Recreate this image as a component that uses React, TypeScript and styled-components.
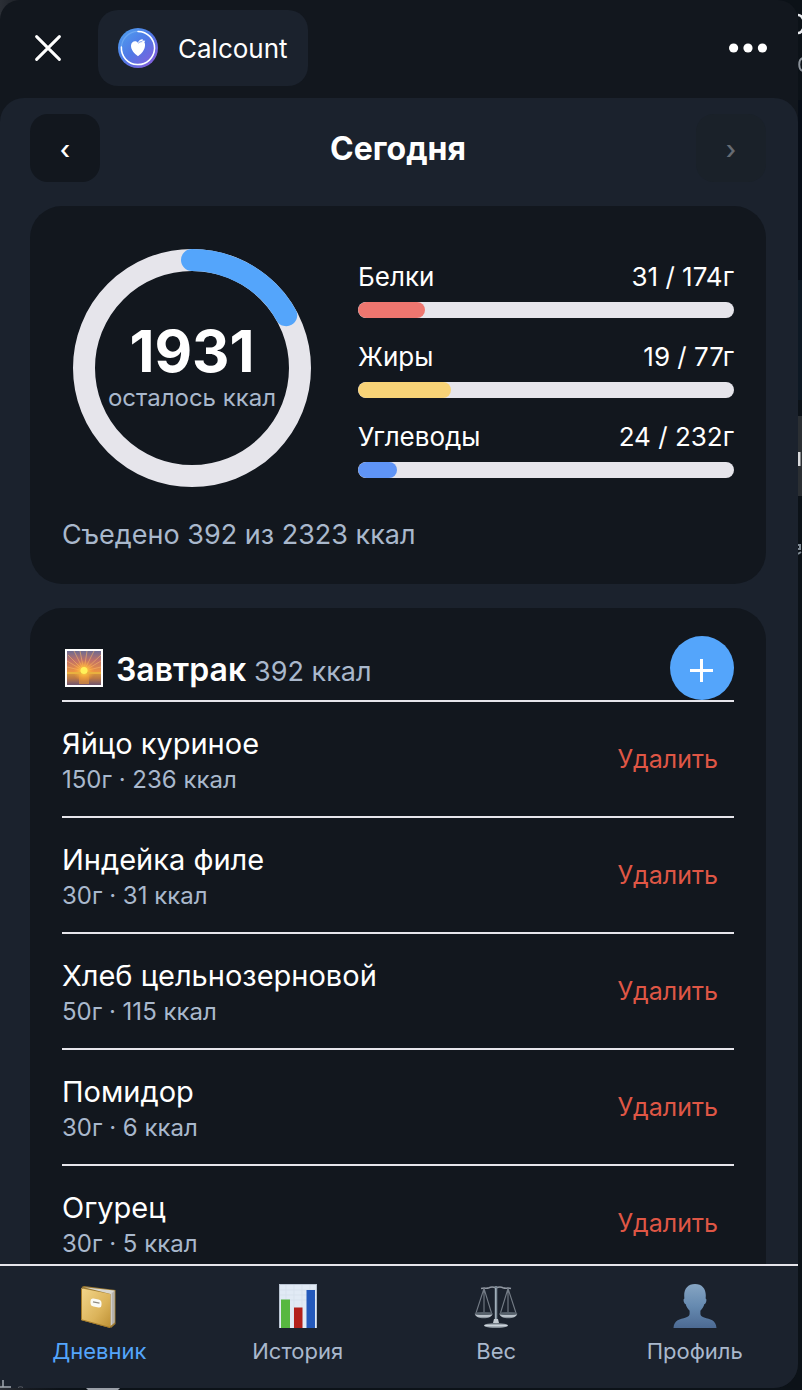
import React from "react";
import styled, { createGlobalStyle } from "styled-components";

const color = {
  card: "#12171e",
  page: "#1b222d",
  line: "#e6e5eb",
  text: "#ffffff",
  muted: "#a9b8cc",
  accent: "#54a5fb",
  danger: "#df5645",
};

const GlobalStyle = createGlobalStyle`
  * { box-sizing: border-box; }
  body {
    margin: 0;
    background: #0c1218;
    color: ${color.text};
    font-family: Inter, "Liberation Sans", sans-serif;
  }
  button { font: inherit; color: inherit; border: 0; padding: 0; background: none; cursor: pointer; }
  h1, h2, p, ul { margin: 0; padding: 0; }
  svg { display: block; }
`;

const Desktop = styled.div`
  position: relative;
  height: 100vh;
  padding: 0 4px 2px 0;
  overflow: hidden;
  background: linear-gradient(90deg, #2b2f36 0, #15191f 30px, #0c1218 60px);
`;

const EdgeBehind = styled.svg`
  position: absolute;
  top: 0;
  right: 0;
`;

const BottomBehind = styled.svg`
  position: absolute;
  bottom: 0;
  left: 0;
`;

const Window = styled.div`
  display: flex;
  flex-direction: column;
  height: 100%;
  overflow: hidden;
  border-radius: 20px 20px 24px 8px;
  background: ${color.card};
`;

const TitleBar = styled.header`
  display: flex;
  align-items: center;
  flex: none;
  height: 98px;
  padding: 0 30px 2px 34px;
`;

const IconButton = styled.button`
  display: flex;
`;

const AppTab = styled.button`
  display: flex;
  align-items: center;
  gap: 20px;
  height: 76px;
  margin: 0 auto 0 36px;
  padding: 0 20px;
  border-radius: 20px;
  background: ${color.page};
  font-size: 26px;
`;

const Body = styled.main`
  flex: 1;
  min-height: 0;
  overflow: hidden;
  padding: 16px 32px 0 30px;
  border-radius: 24px 24px 0 0;
  background: ${color.page};
`;

const DateBar = styled.div`
  display: flex;
  align-items: center;
  justify-content: space-between;
  margin-bottom: 24px;
`;

const DateTitle = styled.h1`
  padding-top: 2px;
  font-size: 32px;
  line-height: 40px;
  font-weight: 700;
`;

const StepButton = styled.button`
  width: 70px;
  height: 68px;
  padding-top: 4px;
  border-radius: 18px;
  background: ${color.card};
  font-size: 26px;
  line-height: 64px;
  font-weight: 500;

  &:disabled {
    background: #1a2129;
    color: #666b72;
  }
`;

const Card = styled.section`
  margin-bottom: 24px;
  border-radius: 32px;
  background: ${color.card};
`;

const SummaryCard = styled(Card)`
  padding: 32px;
`;

const SummaryTop = styled.div`
  display: flex;
  gap: 36px;
  margin-bottom: 20px;
`;

const Ring = styled.div`
  display: grid;
  flex: none;
  width: 260px;
  height: 260px;

  > * { grid-area: 1 / 1; }
`;

const RingText = styled.div`
  align-self: center;
  padding-bottom: 4px;
  text-align: center;
`;

const RingValue = styled.p`
  font-size: 58px;
  line-height: 64px;
  font-weight: 700;
`;

const RingCaption = styled.p`
  color: ${color.muted};
  font-size: 24px;
  line-height: 30px;
`;

const Macros = styled.div`
  display: flex;
  flex-direction: column;
  flex: 1;
  gap: 24px;
  padding-top: 24px;
`;

const MacroLabel = styled.div`
  display: flex;
  justify-content: space-between;
  margin-bottom: 10px;
  font-size: 26px;
  line-height: 30px;
`;

const Track = styled.div`
  height: 16px;
  overflow: hidden;
  border-radius: 8px;
  background: ${color.line};
`;

const Fill = styled.div<{ $color: string }>`
  height: 100%;
  border-radius: 8px;
  background: ${(p) => p.$color};
`;

const Eaten = styled.p`
  color: ${color.muted};
  font-size: 27px;
  line-height: 34px;
`;

const MealCard = styled(Card)`
  padding: 28px 32px 32px;
`;

const MealHeader = styled.div`
  display: flex;
  align-items: center;
  height: 66px;
  border-bottom: 2px solid ${color.line};
`;

const MealHeading = styled.div`
  display: flex;
  align-items: baseline;
  flex: 1;
  gap: 8px;
  padding: 4px 0 0 12px;
`;

const MealTitle = styled.h2`
  font-size: 32px;
  line-height: 40px;
  font-weight: 600;
`;

const MealTotal = styled.span`
  color: ${color.muted};
  font-size: 27px;
  line-height: 34px;
`;

const AddButton = styled.button`
  display: grid;
  place-items: center;
  width: 64px;
  height: 64px;
  border-radius: 50%;
  background: ${color.accent};
`;

const FoodList = styled.ul`
  list-style: none;
`;

const FoodRow = styled.li`
  display: flex;
  align-items: center;
  justify-content: space-between;
  height: 116px;
  padding-right: 16px;
  border-bottom: 2px solid ${color.line};
`;

const FoodText = styled.div`
  padding-top: 6px;
`;

const FoodName = styled.p`
  font-size: 29px;
  line-height: 36px;
`;

const FoodInfo = styled.p`
  color: ${color.muted};
  font-size: 24px;
  line-height: 36px;
`;

const DeleteButton = styled.button`
  color: ${color.danger};
  font-size: 25px;
`;

const NavBar = styled.nav`
  display: grid;
  grid-template-columns: repeat(4, 1fr);
  flex: none;
  height: 124px;
  padding: 18px 4px 0 0;
  border-top: 2px solid ${color.line};
  background: ${color.page};
`;

const NavItem = styled.a<{ $active?: boolean }>`
  display: flex;
  flex-direction: column;
  align-items: center;
  gap: 8px;
  color: ${(p) => (p.$active ? color.accent : color.muted)};
  font-size: 22px;
  line-height: 30px;
  text-decoration: none;
`;

const CloseIcon = () => (
  <svg width="28" height="28" viewBox="0 0 28 28" aria-hidden="true">
    <path d="M2.600 2.600 25.400 25.400M25.400 2.600 2.600 25.400" stroke="#fff" strokeWidth="3" strokeLinecap="round" />
  </svg>
);

const MoreIcon = () => (
  <svg width="40" height="12" viewBox="0 0 40 12" aria-hidden="true" fill="#fff">
    <circle cx="5.6" cy="6" r="4.6" />
    <circle cx="20" cy="6" r="4.6" />
    <circle cx="34.4" cy="6" r="4.6" />
  </svg>
);

const AppLogo = () => (
  <svg width="40" height="40" viewBox="0 0 40 40" aria-hidden="true">
    <defs>
      <linearGradient id="logo" x1="0.1" y1="0.1" x2="0.85" y2="0.9">
        <stop offset="0" stopColor="#4f9bee" />
        <stop offset="0.5" stopColor="#5078e6" />
        <stop offset="1" stopColor="#8260dc" />
      </linearGradient>
    </defs>
    <circle cx="20" cy="20" r="20" fill="url(#logo)" />
    <circle cx="20" cy="20" r="16.6" fill="none" stroke="#6ba6f2" strokeWidth="1.2" />
    <path d="M20 3.400A16.600 16.600 0 1 1 3.400 19" fill="none" stroke="#fff" strokeWidth="1.500" strokeLinecap="round" />
    <path d="M20 28.200c-4-2.600-7-6.400-7-10.400 0-3 2-4.600 4-4.600 1.400 0 2.300.6 3 1.500.6-2.200 2.400-3.700 5-3.500l-.7 1.300 3 .3-1 1.500c.8 1.100.8 2.200.7 3.500-.3 4-3 7.800-7 10.400z" fill="#fff" />
    <path d="M20.300 15.200c1.200-1.200 2.400-1.700 4-1.500" fill="none" stroke="#5a80e8" strokeWidth="0.8" />
  </svg>
);

const SunriseIcon = () => (
  <svg width="42" height="42" viewBox="0 0 42 42" aria-hidden="true">
    <defs>
      <linearGradient id="sky" x1="0" y1="0" x2="0" y2="1">
        <stop offset="0" stopColor="#6d6c92" />
        <stop offset="0.45" stopColor="#c07068" />
        <stop offset="1" stopColor="#ec9440" />
      </linearGradient>
      <linearGradient id="sea" x1="0" y1="0" x2="0" y2="1">
        <stop offset="0" stopColor="#dd9c3d" />
        <stop offset="0.5" stopColor="#bb7845" />
        <stop offset="1" stopColor="#6f5570" />
      </linearGradient>
      <radialGradient id="sun">
        <stop offset="0" stopColor="#ffe95c" />
        <stop offset="0.35" stopColor="#ffc23e" stopOpacity="0.8" />
        <stop offset="1" stopColor="#ff9a35" stopOpacity="0" />
      </radialGradient>
    </defs>
    <rect x="3" y="2" width="38" height="38" fill="#fff" />
    <rect x="5" y="4" width="34" height="21" fill="url(#sky)" />
    <path
      d="M22 24 5 20M22 24 5 14M22 24 6 8M22 24 12 4M22 24 18 4M22 24 25 4M22 24 32 4M22 24 39 8M22 24 39 14M22 24 39 20"
      stroke="#f7b567"
      strokeWidth="1"
      opacity="0.6"
    />
    <rect x="5" y="25" width="34" height="13" fill="url(#sea)" />
    <rect x="17" y="28" width="10" height="9" fill="#e0913c" opacity="0.7" />
    <circle cx="22" cy="24" r="11" fill="url(#sun)" />
    <path d="M5 26h34" stroke="#e9b13f" strokeWidth="2" />
    <circle cx="22" cy="23.500" r="3.500" fill="#fff15a" />
  </svg>
);

const PlusIcon = () => (
  <svg width="24" height="24" viewBox="0 0 24 24" aria-hidden="true" overflow="visible">
    <path d="M11.500 3v23M0 14.500h23" stroke="#fff" strokeWidth="3" />
  </svg>
);

const DiaryIcon = () => (
  <svg width="44" height="44" viewBox="0 0 44 44" aria-hidden="true">
    <defs>
      <linearGradient id="cover" x1="0" y1="0" x2="1" y2="1">
        <stop offset="0" stopColor="#f3d68b" />
        <stop offset="0.6" stopColor="#dcb45b" />
        <stop offset="1" stopColor="#bd9034" />
      </linearGradient>
    </defs>
    <path d="M4.500 3 7 2l31.500 4v34L34 44z" fill="#9c7a32" />
    <path d="M7 3.200 37.500 6.500v32L33.500 42V10z" fill="#d9d7d0" />
    <path d="M35.300 8.500v32M36.700 7.500v31.500" stroke="#8e8b86" strokeWidth="0.6" />
    <path d="M4 4.300 33.300 10v34L4 36z" fill="url(#cover)" />
    <path d="M4.500 4.500v31.300L33 43.500" fill="none" stroke="#a57b29" strokeWidth="1" />
    <rect x="0" y="0" width="11" height="8" rx="3" transform="matrix(1 .18 0 1 13.500 14)" fill="#fafaf5" />
    <path d="m16 17.800 6.500 1.300" stroke="#8e8a80" strokeWidth="1.200" />
  </svg>
);

const ChartIcon = () => (
  <svg width="44" height="44" viewBox="0 0 44 44" aria-hidden="true">
    <rect x="3" y="0" width="38" height="44" fill="#b9c4d2" />
    <rect x="4" y="1" width="36" height="43" fill="#e1eaf5" />
    <path d="M4 6h36M4 11h36M4 16h36M10 1v43M18 1v43M26 1v43M34 1v43" stroke="#d6e0ed" strokeWidth="0.7" />
    <rect x="5" y="15.500" width="9" height="28.500" fill="#57b840" />
    <rect x="18" y="23.500" width="8.500" height="20.500" fill="#b3201b" />
    <rect x="30.500" y="6" width="8.500" height="38" fill="#2459bb" />
  </svg>
);

const ScalesIcon = () => (
  <svg width="44" height="44" viewBox="0 0 44 44" aria-hidden="true" fill="none">
    <defs>
      <linearGradient id="metal" x1="0" y1="0" x2="0" y2="1">
        <stop offset="0" stopColor="#5c656f" />
        <stop offset="0.5" stopColor="#cdd5dc" />
        <stop offset="1" stopColor="#6a747e" />
      </linearGradient>
    </defs>
    <path d="M7 4.500c4-1 5 .3 8-.8 2.500-1 4.500-.8 7 .3 2.500-1.100 4.500-1.300 7-.3 3 1.100 4-.2 8 .8" stroke="#9299a3" strokeWidth="1.500" />
    <path d="M10 4.500 2 29M10 4.500 17.500 29M10 4.500V28M34 4.500 26.500 29M34 4.500 42 29M34 4.500V28" stroke="#747c86" strokeWidth="1.100" />
    <path d="M22 2v37" stroke="#76838f" strokeWidth="2.600" />
    <path d="M21.700 4v34" stroke="#b8c5cf" strokeWidth="0.800" />
    <path d="M.6 29.500h18.200c-1 3.300-4.600 4.800-9.100 4.800S1.600 32.800.6 29.500zM25.200 29.500h18.200c-1 3.300-4.600 4.800-9.100 4.800s-8.100-1.500-9.100-4.800z" fill="url(#metal)" />
    <ellipse cx="9.700" cy="29.500" rx="9" ry="1.600" fill="#58626c" />
    <ellipse cx="34.300" cy="29.500" rx="9" ry="1.600" fill="#58626c" />
    <path d="M20 35h4l1 4h-6z" fill="#c3cad1" />
    <ellipse cx="22" cy="41.500" rx="12" ry="2.600" fill="url(#metal)" />
  </svg>
);

const ProfileIcon = () => (
  <svg width="44" height="44" viewBox="0 0 44 44" aria-hidden="true">
    <defs>
      <linearGradient id="person" x1="0" y1="0" x2="0" y2="1">
        <stop offset="0" stopColor="#86a5c3" />
        <stop offset="0.5" stopColor="#668ab0" />
        <stop offset="1" stopColor="#4c6a93" />
      </linearGradient>
    </defs>
    <path
      d="M22 0c7 0 10.800 4.600 10.800 11.300 0 1.200-.1 2.200-.2 3.200 1.200.3 1 2.600.2 4.200-.4.900-.8 1.300-1.400 1.400-.8 2.900-2.200 5-4 6.700v3c0 1.700 1.200 2.800 3.700 3.600C37 35.300 43 35.600 43.500 44H.5C1 35.600 7 35.300 12.900 33.400c2.500-.8 3.700-1.900 3.700-3.600v-3c-1.800-1.700-3.200-3.800-4-6.700-.6-.1-1-.5-1.400-1.400-.8-1.600-1-3.900.2-4.200-.1-1-.2-2-.2-3.200C11.200 4.600 15 0 22 0z"
      fill="url(#person)"
    />
  </svg>
);

const macros = [
  { name: "Белки", eaten: 31, goal: 174, color: "#ee766f" },
  { name: "Жиры", eaten: 19, goal: 77, color: "#f8d377" },
  { name: "Углеводы", eaten: 24, goal: 232, color: "#5f94f6" },
];

const foods = [
  { name: "Яйцо куриное", grams: 150, kcal: 236 },
  { name: "Индейка филе", grams: 30, kcal: 31 },
  { name: "Хлеб цельнозерновой", grams: 50, kcal: 115 },
  { name: "Помидор", grams: 30, kcal: 6 },
  { name: "Огурец", grams: 30, kcal: 5 },
];

const tabs = [
  { label: "Дневник", href: "#diary", Icon: DiaryIcon },
  { label: "История", href: "#history", Icon: ChartIcon },
  { label: "Вес", href: "#weight", Icon: ScalesIcon },
  { label: "Профиль", href: "#profile", Icon: ProfileIcon },
];

const eaten = 392;
const goal = 2323;

export default function App() {
  return (
    <Desktop>
      <GlobalStyle />
      <EdgeBehind width="4" height="560" viewBox="0 0 4 560" aria-hidden="true">
        <path d="M0 100h4v180H0z" fill="#070d16" />
        <path d="M0 280h4v120H0z" fill="#0d1823" />
        <path d="M0 416h4v80H0z" fill="#2b2f33" />
        <path d="M0 15c3 0 4 2 6 6M0 33c3 0 4-2 6-6" stroke="#e8eaee" strokeWidth="2.500" fill="none" />
        <path d="M5 58c-5 1-5 12 0 13" stroke="#8c939b" strokeWidth="2" fill="none" />
        <path d="M0 452h2.500v14H0z" fill="#d9dadc" />
        <path d="M0 545h2v4H0M0 554l3-2" stroke="#7f8a94" strokeWidth="2" fill="none" />
      </EdgeBehind>
      <Window>
        <TitleBar>
          <IconButton aria-label="Закрыть">
            <CloseIcon />
          </IconButton>
          <AppTab>
            <AppLogo />
            Calcount
          </AppTab>
          <IconButton aria-label="Меню">
            <MoreIcon />
          </IconButton>
        </TitleBar>
        <Body>
          <DateBar>
            <StepButton aria-label="Предыдущий день">‹</StepButton>
            <DateTitle>Сегодня</DateTitle>
            <StepButton aria-label="Следующий день" disabled>›</StepButton>
          </DateBar>
          <SummaryCard>
            <SummaryTop>
              <Ring>
                <svg width="260" height="260" viewBox="0 0 260 260" fill="none" strokeWidth="22" aria-hidden="true">
                  <circle cx="130" cy="130" r="108" stroke={color.line} />
                  <circle
                    cx="130"
                    cy="130"
                    r="108"
                    stroke={color.accent}
                    strokeLinecap="round"
                    pathLength={goal}
                    strokeDasharray={`${eaten} ${goal}`}
                    transform="rotate(-90 130 130)"
                  />
                </svg>
                <RingText>
                  <RingValue>{goal - eaten}</RingValue>
                  <RingCaption>осталось ккал</RingCaption>
                </RingText>
              </Ring>
              <Macros>
                {macros.map((m) => (
                  <div key={m.name}>
                    <MacroLabel>
                      <span>{m.name}</span>
                      <span>{`${m.eaten} / ${m.goal}г`}</span>
                    </MacroLabel>
                    <Track>
                      <Fill $color={m.color} style={{ width: `${(m.eaten / m.goal) * 100}%` }} />
                    </Track>
                  </div>
                ))}
              </Macros>
            </SummaryTop>
            <Eaten>{`Съедено ${eaten} из ${goal} ккал`}</Eaten>
          </SummaryCard>
          <MealCard>
            <MealHeader>
              <SunriseIcon />
              <MealHeading>
                <MealTitle>Завтрак</MealTitle>
                <MealTotal>{`${eaten} ккал`}</MealTotal>
              </MealHeading>
              <AddButton aria-label="Добавить">
                <PlusIcon />
              </AddButton>
            </MealHeader>
            <FoodList>
              {foods.map((f) => (
                <FoodRow key={f.name}>
                  <FoodText>
                    <FoodName>{f.name}</FoodName>
                    <FoodInfo>{`${f.grams}г · ${f.kcal} ккал`}</FoodInfo>
                  </FoodText>
                  <DeleteButton>Удалить</DeleteButton>
                </FoodRow>
              ))}
            </FoodList>
          </MealCard>
        </Body>
        <NavBar>
          {tabs.map(({ label, href, Icon }, i) => (
            <NavItem key={label} href={href} $active={i === 0}>
              <Icon />
              {label}
            </NavItem>
          ))}
        </NavBar>
      </Window>
      <BottomBehind width="144" height="10" viewBox="0 0 144 10" aria-hidden="true">
        <path d="M3 0v7M0 7h11" stroke="#a3a9b1" strokeWidth="1.500" />
        <path d="M18 7.500c2-1 3-1 5 0" stroke="#5c6068" strokeWidth="1" fill="none" />
        <path d="M86 8h34l-2 2H88z" fill="#9a9fa7" />
      </BottomBehind>
    </Desktop>
  );
}
